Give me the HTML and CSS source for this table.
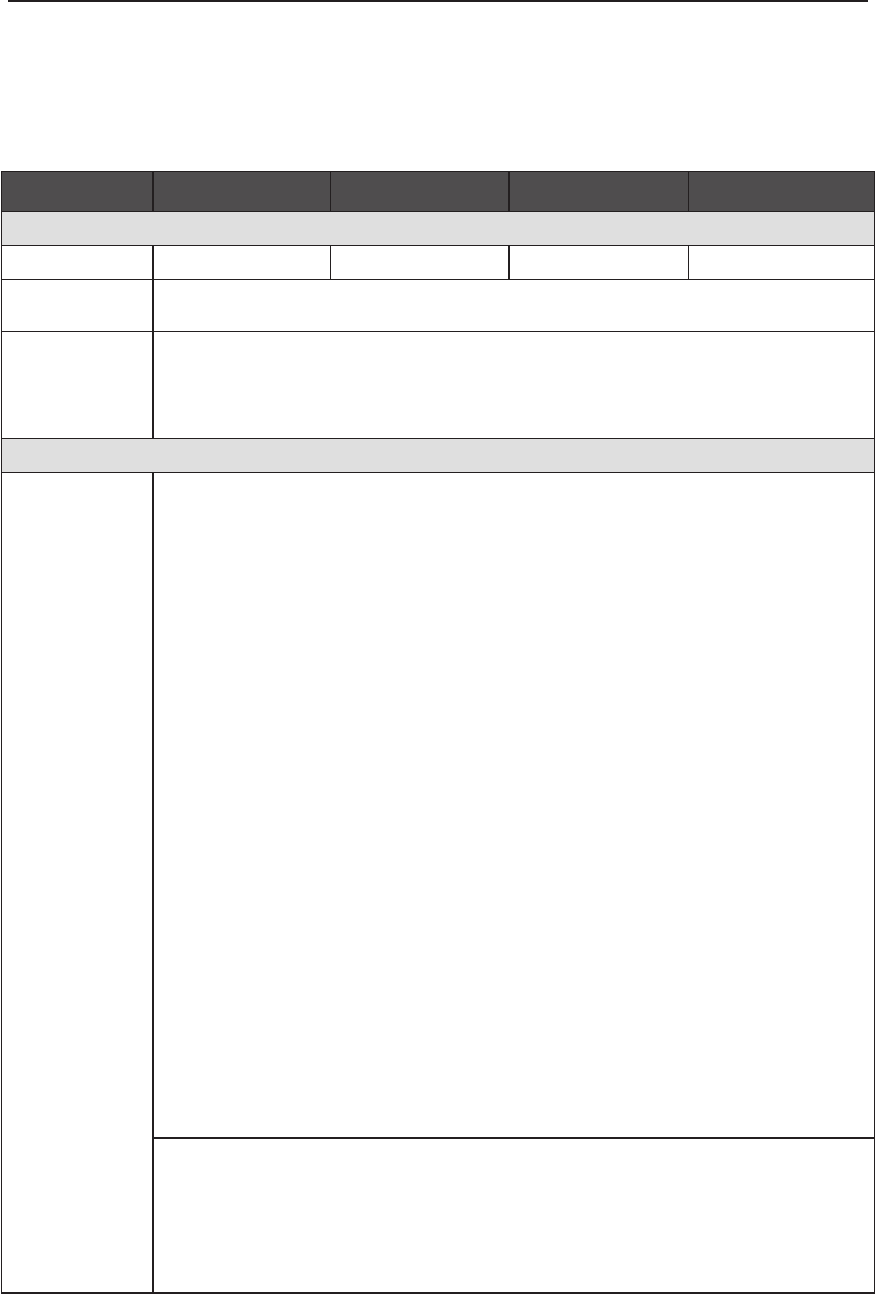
FILE: index.html
```html
<!DOCTYPE html>
<html lang="en">
<head>
  <meta charset="UTF-8" />
  <meta name="viewport" content="width=device-width, initial-scale=1.0" />
  <title>Table</title>
  <link rel="stylesheet" href="styles.css">
</head>
<body>
  <div class="rule"></div>

  <table class="sheet">
    <colgroup>
      <col class="c1"><col class="c2"><col class="c3"><col class="c4"><col class="c5">
    </colgroup>
    <tr class="head">
      <th class="first"></th><th></th><th class="split"></th><th></th><th></th>
    </tr>
    <tr class="band">
      <td colspan="5"></td>
    </tr>
    <tr class="r-small">
      <td class="first"></td><td></td><td class="split"></td><td></td><td></td>
    </tr>
    <tr class="r-mid">
      <td class="first"></td><td colspan="4"></td>
    </tr>
    <tr class="r-tall">
      <td class="first"></td><td colspan="4"></td>
    </tr>
    <tr class="band">
      <td colspan="5"></td>
    </tr>
    <tr class="r-big">
      <td class="first" rowspan="2"></td><td colspan="4" class="big"></td>
    </tr>
    <tr class="r-last">
      <td colspan="4"></td>
    </tr>
  </table>
</body>
</html>
```

FILE: styles.css
```css
* { margin: 0; padding: 0; box-sizing: border-box; }
body, html {
  background: #fff;
  font-family: 'Liberation Sans', sans-serif;
  color: #231f20;
}
.rule {
  margin-left: 8px;
  width: 860px;
  height: 2px;
  background: #231f20;
}
.sheet {
  margin: 169px 0 0 1px;
  width: 873px;
  table-layout: fixed;
  border-collapse: collapse;
  border: 1px solid #231f20;
  border-bottom-width: 2px;
}
.c1 { width: 151px; }
.c2 { width: 178px; }
.c3 { width: 178px; }
.c4 { width: 180px; }
.c5 { width: 186px; }
th, td {
  border: 1px solid #231f20;
  padding: 0;
}
.first { border-right-width: 2px; }
.split { border-right-width: 2px; }
.head th { background: #4f4d4e; }
.band td { background: #dfdfdf; }
.head { height: 40px; }
.band { height: 34px; }
.r-small { height: 34px; }
.r-mid { height: 52px; }
.r-tall { height: 107px; }
.r-big { height: 665px; }
.big { border-bottom-width: 2px; }
.r-last { height: 155px; }
```
